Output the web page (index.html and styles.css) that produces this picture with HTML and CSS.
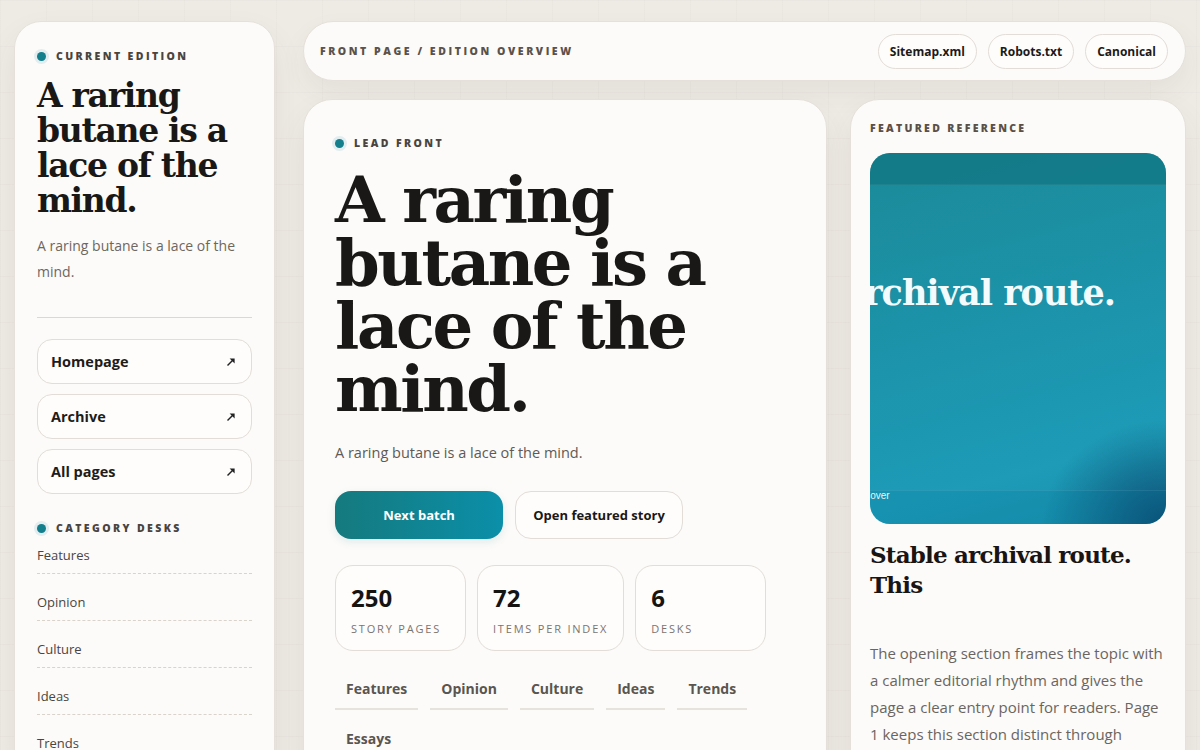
FILE: index.html
```html
<!DOCTYPE html>
<html lang="en">
<head>
<meta charset="utf-8">
<title>Front page / Edition overview</title>
<link rel="stylesheet" href="styles.css">
</head>
<body>
<div class="page">
  <aside class="card sidebar">
    <div class="eyebrow"><span class="dot"></span>Current edition</div>
    <h1 class="side-title">A raring butane is a lace of the mind.</h1>
    <p class="side-sub">A raring butane is a lace of the mind.</p>
    <hr class="rule">
    <nav class="side-links">
      <a class="side-link" href="#">Homepage <svg class="arr" viewBox="0 0 10 10"><path d="M1.5 8.5 L6.5 3.5" /><polygon points="3.6,1.4 8.6,1.4 8.6,6.4" /></svg></a>
      <a class="side-link" href="#">Archive <svg class="arr" viewBox="0 0 10 10"><path d="M1.5 8.5 L6.5 3.5" /><polygon points="3.6,1.4 8.6,1.4 8.6,6.4" /></svg></a>
      <a class="side-link" href="#">All pages <svg class="arr" viewBox="0 0 10 10"><path d="M1.5 8.5 L6.5 3.5" /><polygon points="3.6,1.4 8.6,1.4 8.6,6.4" /></svg></a>
    </nav>
    <div class="eyebrow desks-label"><span class="dot"></span>Category desks</div>
    <ul class="desk-list">
      <li>Features</li>
      <li>Opinion</li>
      <li>Culture</li>
      <li>Ideas</li>
      <li>Trends</li>
      <li>Essays</li>
    </ul>
  </aside>

  <main class="main">
    <header class="topbar">
      <div class="crumb">Front page / Edition overview</div>
      <div class="chips">
        <a class="chip" href="#">Sitemap.xml</a>
        <a class="chip" href="#">Robots.txt</a>
        <a class="chip" href="#">Canonical</a>
      </div>
    </header>

    <div class="content">
      <section class="card lead">
        <div class="eyebrow"><span class="dot"></span>Lead front</div>
        <h2 class="lead-title">A raring butane is a lace of the mind.</h2>
        <p class="lead-sub">A raring butane is a lace of the mind.</p>
        <div class="actions">
          <a class="btn btn-primary" href="#">Next batch</a>
          <a class="btn btn-ghost" href="#">Open featured story</a>
        </div>
        <div class="stats">
          <div class="stat"><div class="stat-num">250</div><div class="stat-label">Story pages</div></div>
          <div class="stat"><div class="stat-num">72</div><div class="stat-label">Items per index</div></div>
          <div class="stat"><div class="stat-num">6</div><div class="stat-label">Desks</div></div>
        </div>
        <div class="tags">
          <a class="tag" href="#">Features</a>
          <a class="tag" href="#">Opinion</a>
          <a class="tag" href="#">Culture</a>
          <a class="tag" href="#">Ideas</a>
          <a class="tag" href="#">Trends</a>
          <a class="tag" href="#">Essays</a>
        </div>
      </section>

      <aside class="card feature">
        <div class="eyebrow plain">Featured reference</div>
        <div class="cover">
          <div class="cover-band"></div>
          <div class="cover-title">Stable archival route.</div>
          <div class="cover-strip"><span>Cover</span></div>
        </div>
        <h3 class="feature-title">Stable archival route. This</h3>
        <p class="feature-text">The opening section frames the topic with a calmer editorial rhythm and gives the page a clear entry point for readers. Page 1 keeps this section distinct through</p>
      </aside>
    </div>
  </main>
</div>
</body>
</html>
```

FILE: styles.css
```css
* { box-sizing: border-box; }

html, body {
  margin: 0;
  height: 100%;
  overflow: hidden;
}

body {
  background-color: #eeebe5;
  background-image:
    linear-gradient(rgba(90, 70, 40, 0.022) 1px, transparent 1px),
    linear-gradient(90deg, rgba(90, 70, 40, 0.018) 1px, transparent 1px);
  background-size: 46px 46px;
  font-family: "Open Sans", "Liberation Sans", sans-serif;
  color: #1c1a18;
}

a { color: inherit; text-decoration: none; }

.page {
  display: grid;
  grid-template-columns: 261px 1fr;
  gap: 28px;
  padding: 21px 14px 0;
}

.card {
  background: #fcfbf9;
  border: 1px solid #e5e1da;
  border-radius: 27px;
  box-shadow: 0 14px 32px rgba(70, 55, 35, 0.07);
}

/* eyebrow labels */
.eyebrow {
  display: flex;
  align-items: center;
  gap: 10px;
  font-size: 10.5px;
  line-height: 14px;
  font-weight: 800;
  letter-spacing: 2.4px;
  text-transform: uppercase;
  color: #4a443e;
}

.dot {
  width: 9px;
  height: 9px;
  border-radius: 50%;
  background: #137e8c;
  box-shadow: 0 0 0 3px #e2edf0;
  flex: none;
}

/* sidebar */
.sidebar {
  padding: 27px 22px 40px;
  min-height: 760px;
}

.side-title {
  margin: 15px 0 0;
  font-family: "DejaVu Serif", "Liberation Serif", serif;
  font-weight: 700;
  font-size: 33px;
  line-height: 35px;
  letter-spacing: -1.3px;
  color: #1a1816;
}

.side-sub {
  margin: 15px 0 0;
  font-size: 14px;
  line-height: 26px;
  color: #6d6761;
}

.rule {
  margin: 32px 0 0;
  border: 0;
  border-top: 1px solid #dcd7cf;
}

.side-links {
  display: flex;
  flex-direction: column;
  gap: 10px;
  margin-top: 21px;
}

.side-link {
  display: flex;
  align-items: center;
  justify-content: space-between;
  height: 45px;
  padding: 0 14px 0 13px;
  border: 1px solid #e2ddd6;
  border-radius: 15px;
  background: #fefdfc;
  font-size: 14.5px;
  font-weight: 700;
  color: #1e1c1a;
}

.arr {
  width: 10px;
  height: 10px;
  margin-right: 1px;
}
.arr path { stroke: #222; stroke-width: 1.5; fill: none; }
.arr polygon { fill: #222; }

.desks-label { margin-top: 27px; }

.desk-list {
  list-style: none;
  margin: 0;
  padding: 0;
}

.desk-list li {
  padding: 18px 0 8px;
  line-height: 20px;
  font-size: 13px;
  color: #4a4540;
  border-bottom: 1px dashed #d8d3cb;
}

.desk-list li:first-child { padding-top: 10px; }

/* main column */
.main {
  display: flex;
  flex-direction: column;
  gap: 18px;
}

.topbar {
  display: flex;
  align-items: center;
  justify-content: space-between;
  height: 60px;
  padding: 0 17px 0 16px;
  background: #fcfbf9;
  border: 1px solid #e5e1da;
  border-radius: 30px;
  box-shadow: 0 12px 28px rgba(70, 55, 35, 0.06);
}

.crumb {
  font-size: 10.5px;
  font-weight: 800;
  letter-spacing: 2.55px;
  text-transform: uppercase;
  color: #5a524b;
}

.chips {
  display: flex;
  gap: 11px;
}

.chip {
  display: flex;
  align-items: center;
  height: 35px;
  padding: 0 11px;
  border: 1px solid #e2ddd6;
  border-radius: 18px;
  background: #fefdfc;
  font-size: 12px;
  font-weight: 700;
  color: #1c1a18;
}

.content {
  display: grid;
  grid-template-columns: 524px 1fr;
  gap: 23px;
  align-items: start;
}

/* lead card */
.lead {
  padding: 36px 31px 40px;
  min-height: 680px;
  border-radius: 29px;
}

.lead-title {
  margin: 18px 0 0;
  font-family: "DejaVu Serif", "Liberation Serif", serif;
  font-weight: 700;
  font-size: 64px;
  line-height: 63px;
  letter-spacing: -2.4px;
  color: #1a1816;
}

.lead-sub {
  margin: 21px 0 0;
  font-size: 14.5px;
  line-height: 24px;
  color: #5f5a55;
}

.actions {
  display: flex;
  gap: 12px;
  margin-top: 26px;
}

.btn {
  display: flex;
  align-items: center;
  justify-content: center;
  width: 168px;
  height: 48px;
  border-radius: 16px;
  font-size: 13px;
  font-weight: 700;
}

.btn-primary {
  background: linear-gradient(90deg, #157a7e, #0b8fa9);
  color: #ffffff;
  box-shadow: 0 3px 8px rgba(15, 120, 140, 0.12);
}

.btn-ghost {
  background: #fefdfc;
  border: 1px solid #e2ddd6;
  color: #1a1816;
}

.stats {
  display: flex;
  gap: 11px;
  margin-top: 26px;
}

.stat {
  min-width: 131px;
  height: 86px;
  padding: 16px 15px 0;
  border: 1px solid #e2ddd6;
  border-radius: 18px;
  background: #fefdfc;
}

.stat-num {
  font-size: 24px;
  line-height: 32px;
  font-weight: 700;
  color: #161412;
}

.stat-label {
  margin-top: 8px;
  font-size: 11px;
  line-height: 14px;
  letter-spacing: 1.8px;
  text-transform: uppercase;
  color: #7a746e;
}

.tags {
  display: flex;
  flex-wrap: wrap;
  gap: 11px 12px;
  margin-top: 20px;
}

.tag {
  padding: 8px 11px 9px;
  line-height: 20px;
  font-size: 14px;
  font-weight: 700;
  color: #5a554f;
  border-bottom: 2px solid #e6e2dc;
}

/* feature card */
.feature {
  padding: 21px 19px 40px;
  min-height: 680px;
  border-radius: 29px;
}

.eyebrow.plain { color: #5a5047; letter-spacing: 2.3px; }

.cover {
  position: relative;
  margin-top: 18px;
  height: 371px;
  border-radius: 20px;
  overflow: hidden;
  background:
    radial-gradient(ellipse 60% 40% at 100% 100%, rgba(10, 60, 100, 0.8), rgba(10, 60, 100, 0) 70%),
    linear-gradient(165deg, #1b8a98 0%, #1c93aa 45%, #1d9bb7 80%, #1890ad 100%);
}

.cover-band {
  height: 32px;
  background: rgba(12, 110, 120, 0.55);
  border-bottom: 1px solid rgba(255, 255, 255, 0.05);
}

.cover-title {
  position: absolute;
  right: 51px;
  top: 118px;
  white-space: nowrap;
  font-family: "DejaVu Serif", "Liberation Serif", serif;
  font-weight: 700;
  font-size: 35px;
  line-height: 44px;
  letter-spacing: -1px;
  color: #f3fbfc;
}

.cover-strip {
  position: absolute;
  left: 0;
  right: 0;
  bottom: 0;
  height: 34px;
  border-top: 1px solid rgba(255, 255, 255, 0.08);
  background: rgba(0, 110, 150, 0.18);
  overflow: hidden;
}

.cover-strip span {
  display: block;
  margin: -2px 0 0 -7px;
  font-family: "Liberation Sans", sans-serif;
  font-size: 10px;
  line-height: 14px;
  color: #e8f6f9;
}

.feature-title {
  margin: 16px 0 0;
  font-family: "DejaVu Serif", "Liberation Serif", serif;
  font-weight: 700;
  font-size: 23px;
  line-height: 30px;
  letter-spacing: -0.8px;
  color: #1a1412;
}

.feature-text {
  margin: 40px 0 0;
  font-size: 15px;
  line-height: 27px;
  color: #6b655f;
}
```
